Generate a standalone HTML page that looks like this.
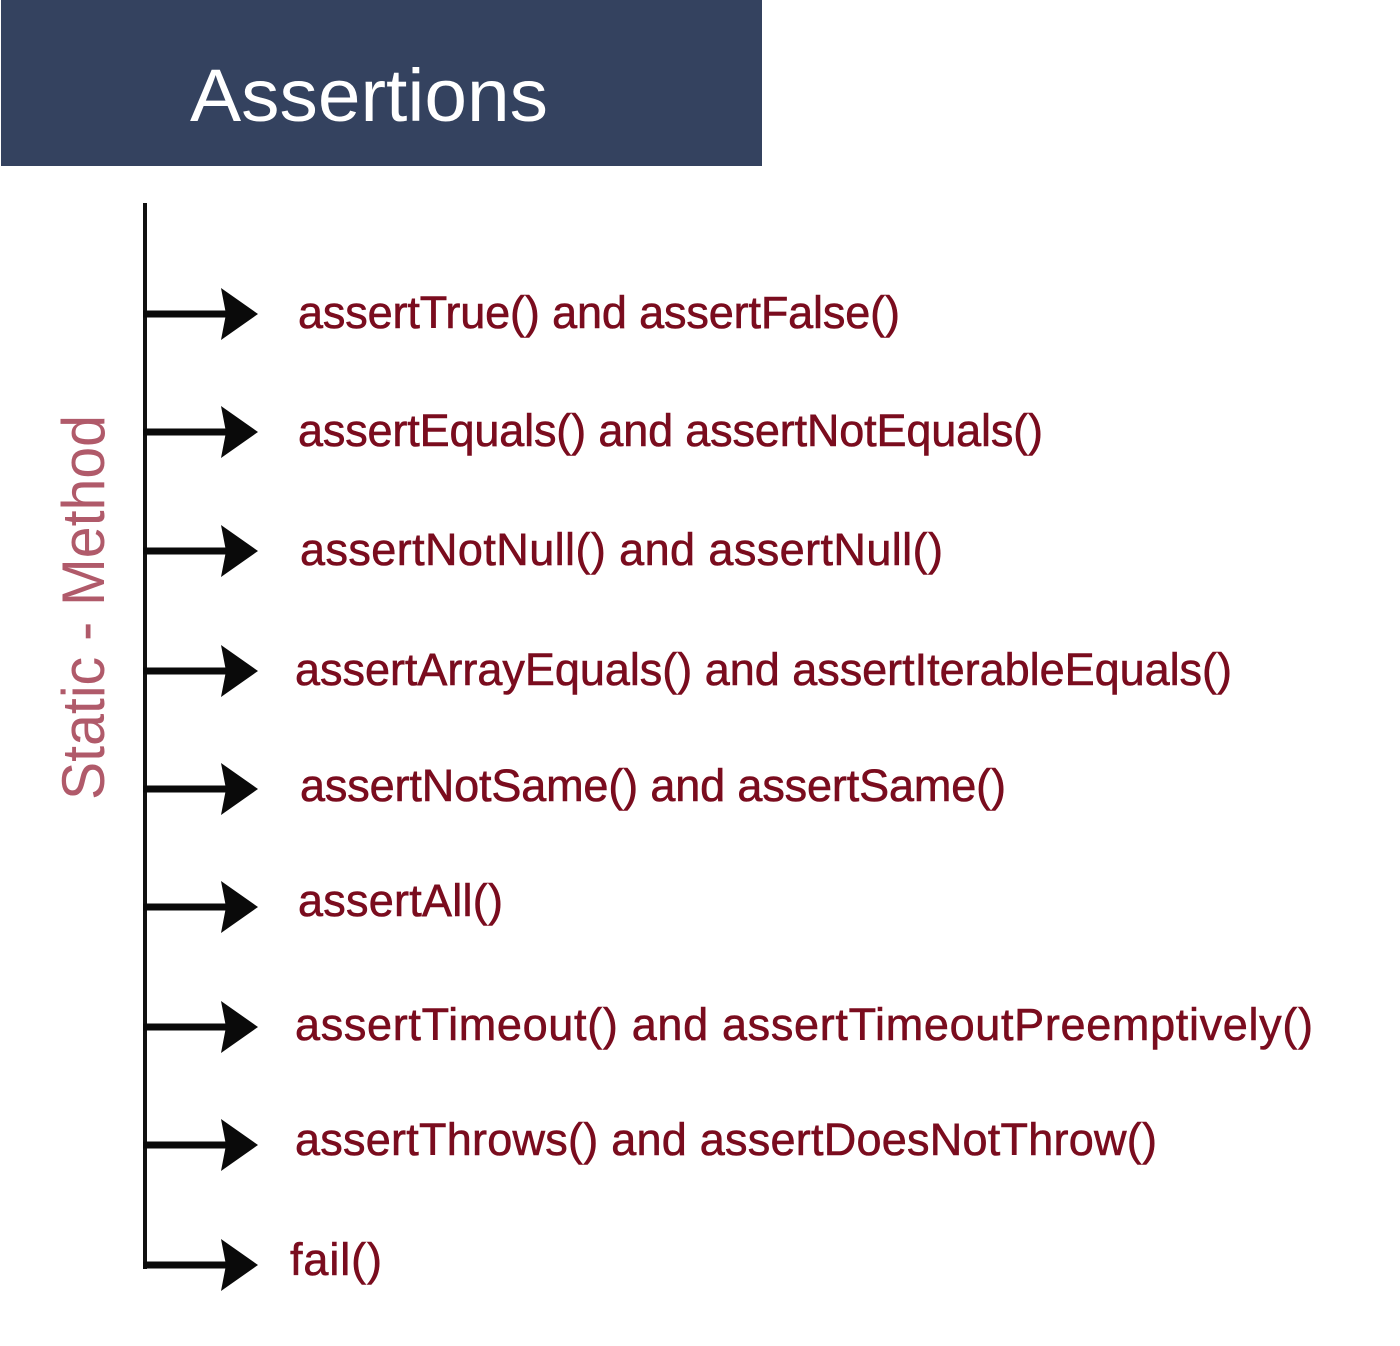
<!DOCTYPE html>
<html><head><meta charset="utf-8"><style>
html,body{margin:0;padding:0;background:#fff;}
svg{display:block}
</style></head><body>
<svg width="1400" height="1346" xmlns="http://www.w3.org/2000/svg">
<rect x="1" y="0" width="761" height="166" fill="#34425f"/>
<text x="190" y="121" font-family="Liberation Sans, sans-serif" font-size="74" fill="#fff" textLength="358" lengthAdjust="spacingAndGlyphs">Assertions</text>
<text transform="translate(104,800) rotate(-90)" font-family="Liberation Sans, sans-serif" font-size="60" fill="#b05a6a" textLength="385" lengthAdjust="spacingAndGlyphs">Static - Method</text>
<rect x="143" y="203" width="4" height="1066" fill="#111"/>
<defs>
<g id="ar"><rect x="143" y="-3.5" width="84" height="7" fill="#0a0a0a"/><path d="M221,-26 L258,0 L221,26 L226,0 Z" fill="#0a0a0a"/></g>
</defs>
<use href="#ar" y="314"/><use href="#ar" y="432"/><use href="#ar" y="551"/><use href="#ar" y="671"/><use href="#ar" y="789"/><use href="#ar" y="907"/><use href="#ar" y="1027"/><use href="#ar" y="1145"/><use href="#ar" y="1265"/>
<g font-family="Liberation Sans, sans-serif" font-size="45" fill="#7a0c1e" stroke="#7a0c1e" stroke-width="0.6" lengthAdjust="spacingAndGlyphs">
<text x="298" y="328" textLength="602">assertTrue() and assertFalse()</text>
<text x="298" y="446" textLength="745">assertEquals() and assertNotEquals()</text>
<text x="300" y="565" textLength="643">assertNotNull() and assertNull()</text>
<text x="295" y="685" textLength="937">assertArrayEquals() and assertIterableEquals()</text>
<text x="300" y="801" textLength="706">assertNotSame() and assertSame()</text>
<text x="298" y="916" textLength="205">assertAll()</text>
<text x="295" y="1040" textLength="1018">assertTimeout() and assertTimeoutPreemptively()</text>
<text x="295" y="1155" textLength="862">assertThrows() and assertDoesNotThrow()</text>
<text x="290" y="1275" textLength="92">fail()</text>
</g>
</svg>
</body></html>
